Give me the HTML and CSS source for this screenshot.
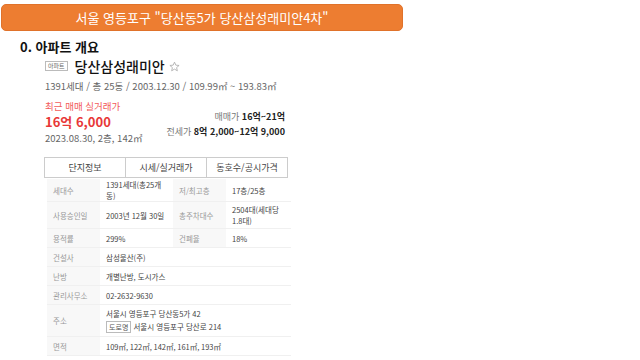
FILE: index.html
```html
<!DOCTYPE html>
<html lang="ko">
<head>
    <meta charset="UTF-8">
    <title>당산삼성래미안</title>
    <link rel="stylesheet" href="styles.css">
</head>
<body>
    <div class="banner">서울 영등포구 "당산동5가 당산삼성래미안4차"</div>

    <div class="section">
        <h2>0. 아파트 개요</h2>
        <div class="apt">
            <div class="title">
                <span class="badge">아파트</span>
                <span class="name">당산삼성래미안</span>
                <svg class="star" width="11" height="11" viewBox="0 0 24 24"><path d="M12 2.5l2.9 6.6 7.1.6-5.4 4.7 1.6 7-6.2-3.7-6.2 3.7 1.6-7L2 9.7l7.1-.6z" fill="none" stroke="#aaa" stroke-width="1.8"/></svg>
            </div>
            <p class="info">1391세대 / 총 25동 / 2003.12.30 / 109.99㎡ ~ 193.83㎡</p>

            <div class="price">
                <div class="recent">
                    <p class="label">최근 매매 실거래가</p>
                    <p class="amount">16억 6,000</p>
                    <p class="date">2023.08.30, 2층, 142㎡</p>
                </div>
                <div class="range">
                    <p><span>매매가</span> <b>16억~21억</b></p>
                    <p><span>전세가</span> <b>8억 2,000~12억 9,000</b></p>
                </div>
            </div>

            <ul class="tabs">
                <li>단지정보</li>
                <li>시세/실거래가</li>
                <li>동호수/공시가격</li>
            </ul>

            <table class="detail">
                <tr class="r1">
                    <th>세대수</th><td>1391세대(총25개동)</td>
                    <th>저/최고층</th><td>17층/25층</td>
                </tr>
                <tr class="r2">
                    <th>사용승인일</th><td>2003년 12월 30일</td>
                    <th>총주차대수</th><td>2504대(세대당 1.8대)</td>
                </tr>
                <tr>
                    <th>용적률</th><td>299%</td>
                    <th>건폐율</th><td>18%</td>
                </tr>
                <tr>
                    <th>건설사</th><td colspan="3">삼성물산(주)</td>
                </tr>
                <tr>
                    <th>난방</th><td colspan="3">개별난방, 도시가스</td>
                </tr>
                <tr>
                    <th>관리사무소</th><td colspan="3">02-2632-9630</td>
                </tr>
                <tr class="addr">
                    <th>주소</th>
                    <td colspan="3">
                        서울시 영등포구 당산동5가 42<br>
                        <span class="road">도로명</span> 서울시 영등포구 당산로 214
                    </td>
                </tr>
                <tr>
                    <th>면적</th><td colspan="3">109㎡, 122㎡, 142㎡, 161㎡, 193㎡</td>
                </tr>
            </table>
        </div>
    </div>
</body>
</html>
```

FILE: styles.css
```css
* {
    padding: 0;
    margin: 0;
    box-sizing: border-box;
}

body {
    background: #fff;
    font-family: "Noto Sans CJK KR", "Noto Sans", sans-serif;
    color: #222;
}

.banner {
    width: 402px;
    height: 27px;
    margin: 4px 0 0 1px;
    background-color: #ed7d31;
    border: 1px solid #e0722a;
    border-radius: 5px;
    color: #fff;
    font-size: 13px;
    line-height: 25px;
    text-align: center;
}

.section {
    padding-left: 20px;
}

h2 {
    font-size: 13px;
    font-weight: bold;
    line-height: 18px;
    margin-top: 7px;
    color: #111;
}

.apt {
    width: 246px;
    margin-left: 25px;
}

/* 제목 */

.title {
    display: flex;
    align-items: center;
    height: 20px;
    margin-top: 0;
}

.badge {
    font-size: 6px;
    line-height: 8px;
    padding: 0 2px;
    border: 1px solid #bbb;
    color: #666;
    margin-right: 7px;
}

.name {
    font-size: 14px;
    font-weight: 500;
    color: #111;
    margin-right: 4px;
}

.info {
    font-size: 9.5px;
    line-height: 14px;
    color: #666;
    margin-top: 3px;
}

/* 가격 */

.price {
    display: flex;
    justify-content: space-between;
    align-items: flex-end;
    margin-top: 6px;
}

.recent .label {
    font-size: 9.5px;
    line-height: 14px;
    color: #f25b5b;
}

.recent .amount {
    font-size: 13px;
    font-weight: bold;
    line-height: 18px;
    color: #e83737;
}

.recent .date {
    font-size: 9.5px;
    line-height: 14px;
    color: #666;
}

.range {
    text-align: right;
    font-size: 9px;
    line-height: 15px;
    padding-bottom: 6px;
    margin-right: 6px;
}

.range span {
    color: #777;
}

.range b {
    color: #222;
}

/* 탭 */

.tabs {
    display: flex;
    width: 244px;
    margin: 12px 0 0 -1px;
    list-style: none;
    border: 1px solid #ccc;
}

.tabs li {
    flex: 1;
    height: 19px;
    font-size: 9px;
    line-height: 19px;
    text-align: center;
    color: #444;
}

.tabs li + li {
    border-left: 1px solid #ccc;
}

/* 단지정보 */

.detail {
    width: 244px;
    margin: 1px 0 0 2px;
    border-collapse: collapse;
    font-size: 7.5px;
}

.detail tr {
    height: 19px;
    border-bottom: 1px solid #f0f0f0;
}

.detail .r2 {
    height: 27px;
}

.detail .addr {
    height: 32px;
}

.detail th {
    width: 53px;
    background-color: #f8f8f8;
    color: #999;
    font-weight: normal;
    text-align: left;
    padding-left: 6px;
}

.detail td {
    color: #444;
    text-align: left;
    padding: 0 4px 0 6px;
    line-height: 11px;
}

.r1 td:nth-of-type(1),
.r2 td:nth-of-type(1) {
    width: 73px;
}

.detail .addr td {
    line-height: 13px;
}

.road {
    border: 1px solid #bbb;
    padding: 0 2px;
    font-size: 7px;
    color: #555;
}
```
